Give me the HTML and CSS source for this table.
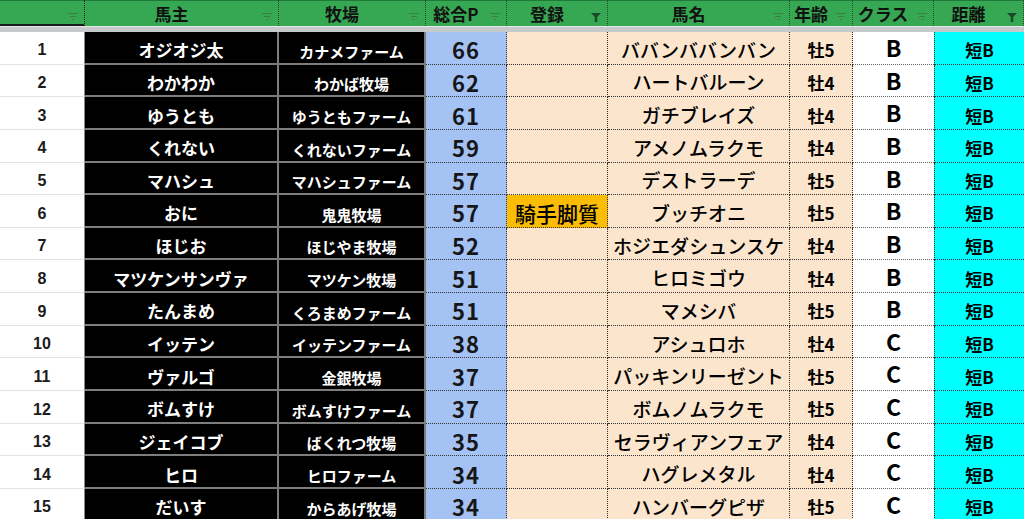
FILE: index.html
```html
<!DOCTYPE html>
<html lang="ja">
<head>
<meta charset="utf-8">
<title>Sheet</title>
<link rel="stylesheet" href="styles.css">
</head>
<body>
<div class="sheet">
  <div class="h h-num"><span class="flt"></span></div>
  <div class="h">馬主<span class="flt"></span></div>
  <div class="h">牧場<span class="flt"></span></div>
  <div class="h">総合P<span class="flt"></span></div>
  <div class="h">登録<span class="flt on"></span></div>
  <div class="h">馬名<span class="flt"></span></div>
  <div class="h">年齢<span class="flt"></span></div>
  <div class="h">クラス<span class="flt"></span></div>
  <div class="h">距離<span class="flt on"></span></div>
  <div class="band"></div>

  <div class="c num">1</div><div class="c own">オジオジ太</div><div class="c farm">カナメファーム</div><div class="c pts">66</div><div class="c reg"></div><div class="c horse">ババンババンバン</div><div class="c age">牡5</div><div class="c cls">B</div><div class="c dist">短B</div>
  <div class="c num">2</div><div class="c own">わかわか</div><div class="c farm">わかば牧場</div><div class="c pts">62</div><div class="c reg"></div><div class="c horse">ハートバルーン</div><div class="c age">牡4</div><div class="c cls">B</div><div class="c dist">短B</div>
  <div class="c num">3</div><div class="c own">ゆうとも</div><div class="c farm">ゆうともファーム</div><div class="c pts">61</div><div class="c reg"></div><div class="c horse">ガチブレイズ</div><div class="c age">牡4</div><div class="c cls">B</div><div class="c dist">短B</div>
  <div class="c num">4</div><div class="c own">くれない</div><div class="c farm">くれないファーム</div><div class="c pts">59</div><div class="c reg"></div><div class="c horse">アメノムラクモ</div><div class="c age">牡4</div><div class="c cls">B</div><div class="c dist">短B</div>
  <div class="c num">5</div><div class="c own">マハシュ</div><div class="c farm">マハシュファーム</div><div class="c pts">57</div><div class="c reg"></div><div class="c horse">デストラーデ</div><div class="c age">牡5</div><div class="c cls">B</div><div class="c dist">短B</div>
  <div class="c num">6</div><div class="c own">おに</div><div class="c farm">鬼鬼牧場</div><div class="c pts">57</div><div class="c reg tag">騎手脚質</div><div class="c horse">ブッチオニ</div><div class="c age">牡5</div><div class="c cls">B</div><div class="c dist">短B</div>
  <div class="c num">7</div><div class="c own">ほじお</div><div class="c farm">ほじやま牧場</div><div class="c pts">52</div><div class="c reg"></div><div class="c horse">ホジエダシュンスケ</div><div class="c age">牡4</div><div class="c cls">B</div><div class="c dist">短B</div>
  <div class="c num">8</div><div class="c own">マツケンサンヴァ</div><div class="c farm">マツケン牧場</div><div class="c pts">51</div><div class="c reg"></div><div class="c horse">ヒロミゴウ</div><div class="c age">牡4</div><div class="c cls">B</div><div class="c dist">短B</div>
  <div class="c num">9</div><div class="c own">たんまめ</div><div class="c farm">くろまめファーム</div><div class="c pts">51</div><div class="c reg"></div><div class="c horse">マメシバ</div><div class="c age">牡5</div><div class="c cls">B</div><div class="c dist">短B</div>
  <div class="c num">10</div><div class="c own">イッテン</div><div class="c farm">イッテンファーム</div><div class="c pts">38</div><div class="c reg"></div><div class="c horse">アシュロホ</div><div class="c age">牡4</div><div class="c cls">C</div><div class="c dist">短B</div>
  <div class="c num">11</div><div class="c own">ヴァルゴ</div><div class="c farm">金銀牧場</div><div class="c pts">37</div><div class="c reg"></div><div class="c horse">パッキンリーゼント</div><div class="c age">牡5</div><div class="c cls">C</div><div class="c dist">短B</div>
  <div class="c num">12</div><div class="c own">ボムすけ</div><div class="c farm">ボムすけファーム</div><div class="c pts">37</div><div class="c reg"></div><div class="c horse">ボムノムラクモ</div><div class="c age">牡5</div><div class="c cls">C</div><div class="c dist">短B</div>
  <div class="c num">13</div><div class="c own">ジェイコブ</div><div class="c farm">ばくれつ牧場</div><div class="c pts">35</div><div class="c reg"></div><div class="c horse">セラヴィアンフェア</div><div class="c age">牡4</div><div class="c cls">C</div><div class="c dist">短B</div>
  <div class="c num">14</div><div class="c own">ヒロ</div><div class="c farm">ヒロファーム</div><div class="c pts">34</div><div class="c reg"></div><div class="c horse">ハグレメタル</div><div class="c age">牡4</div><div class="c cls">C</div><div class="c dist">短B</div>
  <div class="c num">15</div><div class="c own">だいす</div><div class="c farm">からあげ牧場</div><div class="c pts">34</div><div class="c reg"></div><div class="c horse">ハンバーグピザ</div><div class="c age">牡5</div><div class="c cls">C</div><div class="c dist">短B</div>
</div>
</body>
</html>
```
FILE: styles.css
```css
html, body {
  margin: 0;
  padding: 0;
  background: #ffffff;
  overflow: hidden;
}
body {
  width: 1024px;
  height: 519px;
  font-family: "Noto Sans CJK JP", "Noto Sans", sans-serif;
  color: #000;
}
.sheet {
  display: grid;
  grid-template-columns: 85px 194px 147px 81px 101px 182px 63px 81px 90px;
  grid-template-rows: 26px 6px repeat(15, 32.65px);
}
.h {
  position: relative;
  background: #36a853;
  border-top: 1px solid #1f7a3a;
  border-right: 1px dotted #1b4f2b;
  box-sizing: border-box;
  display: flex;
  align-items: center;
  justify-content: center;
  padding-right: 20px;
  padding-bottom: 1px;
  font-weight: 700;
  font-size: 17px;
  line-height: 1;
  color: #111;
}
.h-num {
  border-bottom: 2px solid #1a1a1a;
  border-right: 1px dotted #1a1a1a;
}
.flt {
  position: absolute;
  right: 6px;
  top: 12px;
  width: 10px;
  height: 7px;
  background:
    linear-gradient(#3d7a4c, #3d7a4c) 0 0 / 10px 1px no-repeat,
    linear-gradient(#3d7a4c, #3d7a4c) 2px 3px / 6px 1px no-repeat,
    linear-gradient(#3d7a4c, #3d7a4c) 4px 6px / 2px 1px no-repeat;
}
.flt.on {
  top: 12px;
  width: 10px;
  height: 9px;
  background: #1c4a29;
  clip-path: polygon(0 0, 100% 0, 62% 45%, 62% 100%, 38% 100%, 38% 45%);
}
.band {
  grid-column: 1 / -1;
  background: #c7cacd;
  border-top: 1px solid #e6e8ea;
  box-sizing: border-box;
}
.c {
  box-sizing: border-box;
  display: flex;
  align-items: flex-end;
  justify-content: center;
  line-height: 1.2;
  padding-bottom: 3px;
  white-space: nowrap;
}
.num {
  background: #fff;
  border-bottom: 1px solid #e3e3e3;
  border-right: 1px solid #8a8a8a;
  font-family: "Liberation Sans", Arial, sans-serif;
  font-weight: 700;
  font-size: 16px;
  color: #1b1b1b;
  padding-bottom: 4px;
}
.own, .farm {
  background: #000;
  color: #fff;
  font-weight: 700;
  border-bottom: 2px solid #7d7d7d;
  border-right: 2px solid #7d7d7d;
}
.own { font-size: 17px; padding-bottom: 2px; }
.farm { font-size: 15px; padding-bottom: 2px; }
.pts {
  background: #a4c2f4;
  border-bottom: 1px dotted #333;
  border-right: 1px dotted #333;
  font-weight: 700;
  font-size: 22px;
  letter-spacing: 1px;
  color: #161616;
  padding-bottom: 1px;
}
.reg {
  background: #fce5cd;
  border-bottom: 1px dotted #333;
  border-right: 1px dotted #333;
}
.reg.tag {
  background: #fbbc04;
  font-size: 21px;
  font-weight: 500;
  padding-bottom: 1px;
}
.horse {
  background: #fce5cd;
  border-bottom: 1px dotted #333;
  border-right: 1px dotted #333;
  font-size: 19px;
  font-weight: 500;
  padding-bottom: 2px;
}
.age {
  background: #fce5cd;
  border-bottom: 1px dotted #333;
  border-right: 1px dotted #333;
  font-weight: 700;
  font-size: 17px;
  padding-bottom: 3px;
}
.cls {
  background: #fff;
  border-bottom: 1px dotted #666;
  font-weight: 700;
  font-size: 23px;
  padding-bottom: 2px;
}
.dist {
  background: #00ffff;
  border-bottom: 1px dotted #333;
  border-left: 1px dotted #333;
  font-weight: 700;
  font-size: 17px;
  padding-bottom: 3px;
}
```
